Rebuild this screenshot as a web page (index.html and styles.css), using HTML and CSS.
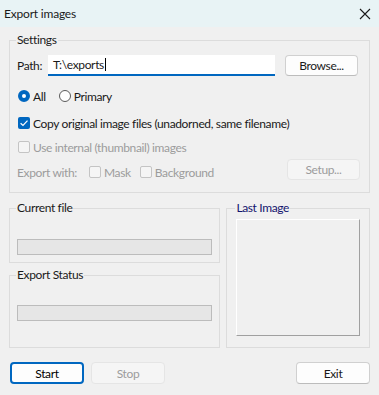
FILE: index.html
```html
<!DOCTYPE html>
<html>
<head>
    <title>Export images</title>
    <meta charset="UTF-8">
    <link rel="stylesheet" href="styles.css">
</head>
<body>
    <div class="window">
        <div class="titlebar">
            <span class="title">Export images</span>
            <svg class="close" width="12" height="12" viewBox="0 0 12 12">
                <path d="M1 1 L11 11 M11 1 L1 11" stroke="#1a1a1a" stroke-width="1.1" fill="none"/>
            </svg>
        </div>
        <div class="content">
            <fieldset class="group settings">
                <legend>Settings</legend>
                <div class="row path-row">
                    <span class="label">Path:</span>
                    <div class="textbox">T:\exports<span class="caret"></span></div>
                    <button class="btn browse">Browse...</button>
                </div>
                <div class="row radio-row">
                    <span class="radio checked"></span><span class="opt">All</span>
                    <span class="radio"></span><span class="opt">Primary</span>
                </div>
                <div class="row copy-row">
                    <span class="check checked">
                        <svg width="12" height="12" viewBox="0 0 12 12"><path d="M2.6 6.2 L5 8.5 L9.5 3.6" stroke="#fff" stroke-width="1.2" fill="none"/></svg>
                    </span>
                    <span class="opt">Copy original image files (unadorned, same filename)</span>
                </div>
                <div class="row thumb-row disabled">
                    <span class="check"></span>
                    <span class="opt">Use internal (thumbnail) images</span>
                </div>
                <div class="row export-row disabled">
                    <span class="label">Export with:</span>
                    <span class="check"></span><span class="opt">Mask</span>
                    <span class="check"></span><span class="opt">Background</span>
                    <button class="btn setup" disabled>Setup...</button>
                </div>
            </fieldset>

            <div class="lower">
                <div class="left-col">
                    <fieldset class="group current">
                        <legend>Current file</legend>
                        <div class="progress"></div>
                    </fieldset>
                    <fieldset class="group status">
                        <legend>Export Status</legend>
                        <div class="progress"></div>
                    </fieldset>
                </div>
                <fieldset class="group last-image">
                    <legend>Last Image</legend>
                    <div class="picture"></div>
                </fieldset>
            </div>

            <div class="buttons">
                <button class="btn default">Start</button>
                <button class="btn" disabled>Stop</button>
                <span class="spacer"></span>
                <button class="btn">Exit</button>
            </div>
        </div>
    </div>
</body>
</html>
```

FILE: styles.css
```css
html, body { margin: 0; padding: 0; }
body {
    width: 379px;
    height: 395px;
    overflow: hidden;
    font-family: Lato, "Noto Sans", sans-serif;
    font-size: 12px;
    letter-spacing: -0.36px;
    color: #1a1a1a;
    background: #f0f0f0;
}
.window { width: 379px; height: 395px; background: #f0f0f0; }

.titlebar {
    height: 27px;
    background: #e8f3f5;
    display: flex;
    align-items: center;
    padding: 0 8px 0 4px;
}
.title { flex: 1; font-size: 12px; letter-spacing: -0.2px; }
.close { display: block; }

.content { padding: 5px 9px 0 9px; }

.group {
    margin: 0;
    padding: 0 7px;
    border: 1px solid #dcdcdc;
    min-width: 0;
}
.group legend {
    padding: 0 1px;
    margin-left: -1px;
    line-height: 16px;
    height: 16px;
}

.settings { padding-bottom: 10px; }
.row { display: flex; align-items: center; }
.path-row { height: 22px; margin-top: 6px; }
.path-row .label { width: 31px; }
.textbox {
    width: 222px;
    height: 19px;
    background: #fff;
    border-bottom: 2px solid #0067c0;
    padding-left: 5px;
    display: flex;
    align-items: center;
}
.caret { width: 1px; height: 13px; background: #000; margin-left: 1px; }
.browse { margin-left: 10px; margin-top: 1px; }

.radio-row { height: 16px; margin-top: 12px; }
.copy-row { height: 16px; margin-top: 11px; }
.thumb-row { height: 16px; margin-top: 8px; }
.export-row { height: 20px; margin-top: 7px; }

.radio, .check {
    width: 12px;
    height: 12px;
    box-sizing: border-box;
    margin-left: 1px;
    flex: none;
}
.radio { border-radius: 50%; border: 1px solid #5a5a5a; background: #fff; }
.radio.checked {
    border: 4px solid #0067c0;
    background: #fff;
}
.check { border-radius: 2px; border: 1px solid #5a5a5a; background: #fff; }
.check.checked { border: none; background: #0067c0; }
.check svg { display: block; }
.opt { margin-left: 3px; margin-right: 12px; }
.radio-row .opt:first-of-type { margin-right: 9px; }

.disabled { color: #9c9c9c; }
.disabled .check { border-color: #c4c4c4; background: #f5f5f5; }
.export-row .label { width: 71px; }
.export-row .opt { margin-right: 8px; }
.setup { margin-left: auto; margin-right: 2px; margin-top: -6px; }

.btn {
    font-family: inherit;
    font-size: 12px;
    letter-spacing: inherit;
    color: #1a1a1a;
    width: 73px;
    height: 21px;
    padding: 0;
    background: #fdfdfd;
    border: 1px solid #d0d0d0;
    border-bottom-color: #bcbcbc;
    border-radius: 4px;
}
.btn:disabled { color: #9c9c9c; background: #f5f5f5; border-color: #e5e5e5; }
.btn.default { border: 2px solid #0067c0; color: #000; }

.lower { display: flex; margin-top: 7px; }
.left-col { width: 212px; display: flex; flex-direction: column; }
.current { padding-bottom: 7px; }
.current .progress { margin-top: 23px; }
.status { margin-top: 4px; padding-bottom: 26px; }
.status .progress { margin-top: 22px; }
.progress {
    height: 14px;
    background: #e6e6e6;
    border: 1px solid #bcbcbc;
}

.last-image { margin-left: 6px; width: 144px; box-sizing: border-box; padding: 0 9px 10px 9px; }
.last-image legend { color: #14146e; }
.picture {
    margin-top: 3px;
    width: 122px;
    height: 115px;
    border: 1px solid #fff;
    border-right-color: #a0a0a0;
    border-bottom-color: #a0a0a0;
}

.buttons { display: flex; margin-top: 14px; padding-left: 1px; }
.buttons .btn { width: 74px; height: 22px; }
.buttons .btn + .btn { margin-left: 7px; }
.spacer { flex: 1; }
```
